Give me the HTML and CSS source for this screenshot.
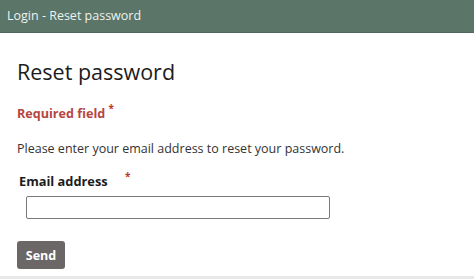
FILE: index.html
```html
<!DOCTYPE html>
<html lang="en">
<head>
  <meta charset="UTF-8">
  <title>Login - Reset password</title>
  <link rel="stylesheet" href="styles.css">
</head>
<body>
  <div class="topbar">Login - Reset password</div>

  <div class="content">
    <h1>Reset password</h1>

    <p class="required-note">Required field <span class="req">*</span></p>

    <p class="intro">Please enter your email address to reset your password.</p>

    <form class="reset-form" onsubmit="return false;">
      <div class="field">
        <label for="email">Email address <span class="req">*</span></label>
        <input type="text" id="email">
      </div>
      <button type="submit">Send</button>
    </form>
  </div>

  <div class="footer-line"></div>
</body>
</html>
```

FILE: styles.css
```css
body {
  margin: 0;
  font-family: "Open Sans", Arial, sans-serif;
  color: #222;
  background: #fff;
}

.topbar {
  background-color: #5b7569;
  color: #eef3ef;
  font-size: 12.5px;
  height: 32px;
  line-height: 32px;
  padding-left: 7px;
  border-bottom: 1px solid #4f685c;
}

.content {
  padding: 24px 17px 0;
  height: 243px;
  box-sizing: border-box;
  overflow: hidden;
}

h1 {
  font-size: 21.5px;
  font-weight: normal;
  margin: 0;
  line-height: 30px;
  color: #1c1c1c;
}

.required-note {
  color: #b5463f;
  font-weight: bold;
  font-size: 12.6px;
  margin: 18px 0 0 0;
  line-height: 18px;
}

.req {
  color: #c0392b;
  font-size: 10px;
  position: relative;
  top: -6px;
}

.intro {
  font-size: 12.5px;
  color: #333;
  margin: 17px 0 0 0;
  line-height: 18px;
}

.field {
  margin-top: 14px;
}

label {
  display: block;
  font-weight: bold;
  font-size: 12.8px;
  color: #1c1c1c;
  padding-left: 2px;
  line-height: 18px;
}

label .req {
  margin-left: 14px;
}

input[type="text"] {
  display: block;
  width: 304px;
  height: 23px;
  margin: 5px 0 0 9px;
  border: 1px solid #7a7a7a;
  border-radius: 2px;
  box-sizing: border-box;
}

button {
  margin-top: 22px;
  background-color: #6b6767;
  color: #fff;
  font-family: "Open Sans", Arial, sans-serif;
  font-weight: bold;
  font-size: 12.5px;
  border: none;
  border-radius: 3px;
  width: 48px;
  height: 28px;
  cursor: pointer;
}

.footer-line {
  height: 3px;
  background: #e8e8e8;
}
```
